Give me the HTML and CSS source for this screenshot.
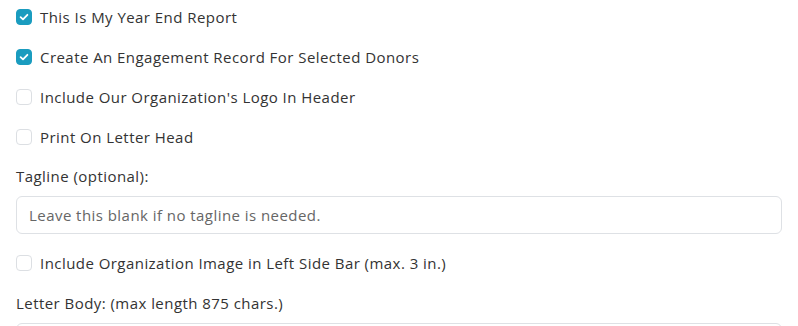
FILE: index.html
```html
<!DOCTYPE html>
<html>
<head>
<meta charset="utf-8">
<link rel="stylesheet" href="styles.css">
</head>
<body>
<div class="form">
  <label class="check"><span class="box on"><svg viewBox="0 0 16 16" width="16" height="16"><path d="M4.6 8.2 L7 10.4 L11.4 5.8" fill="none" stroke="#fff" stroke-width="1.8" stroke-linecap="round" stroke-linejoin="round"/></svg></span><span class="txt">This Is My Year End Report</span></label>
  <label class="check"><span class="box on"><svg viewBox="0 0 16 16" width="16" height="16"><path d="M4.6 8.2 L7 10.4 L11.4 5.8" fill="none" stroke="#fff" stroke-width="1.8" stroke-linecap="round" stroke-linejoin="round"/></svg></span><span class="txt">Create An Engagement Record For Selected Donors</span></label>
  <label class="check"><span class="box"></span><span class="txt">Include Our Organization's Logo In Header</span></label>
  <label class="check"><span class="box"></span><span class="txt">Print On Letter Head</span></label>
  <div class="field">
    <div class="lbl">Tagline (optional):</div>
    <div class="input">Leave this blank if no tagline is needed.</div>
  </div>
  <label class="check"><span class="box"></span><span class="txt">Include Organization Image in Left Side Bar (max. 3 in.)</span></label>
  <div class="field">
    <div class="lbl">Letter Body: (max length 875 chars.)</div>
    <div class="textarea"></div>
  </div>
</div>
</body>
</html>
```
FILE: styles.css
```css
html, body { margin: 0; padding: 0; background: #fff; }
body { font-family: "Open Sans", "Noto Sans", sans-serif; font-size: 15px; letter-spacing: 0.45px; color: #333; overflow: hidden; height: 326px; }
.form { display: flex; flex-direction: column; padding: 9px 16px 0 16px; }
.check { display: flex; align-items: center; gap: 8px; height: 16px; margin-bottom: 24px; }
.box { width: 16px; height: 16px; box-sizing: border-box; border: 1px solid #dcdfe3; border-radius: 4px; background: #fff; display: flex; flex-shrink: 0; }
.box.on { background: #1a9cbf; border-color: #1a9cbf; }
.box svg { display: block; margin: -1px; }
.txt { line-height: 16px; }
.field { display: flex; flex-direction: column; }
.lbl { line-height: 20px; margin-top: -3px; margin-bottom: 10px; }
.input { height: 38px; box-sizing: border-box; border: 1px solid #dee1e5; border-radius: 6px; padding: 0 12px; display: flex; align-items: center; color: #666; margin-bottom: 21px; }
.field:last-child .lbl { margin-top: -2px; }
.textarea { height: 80px; box-sizing: border-box; border: 1px solid #dee1e5; border-radius: 6px; }
```
